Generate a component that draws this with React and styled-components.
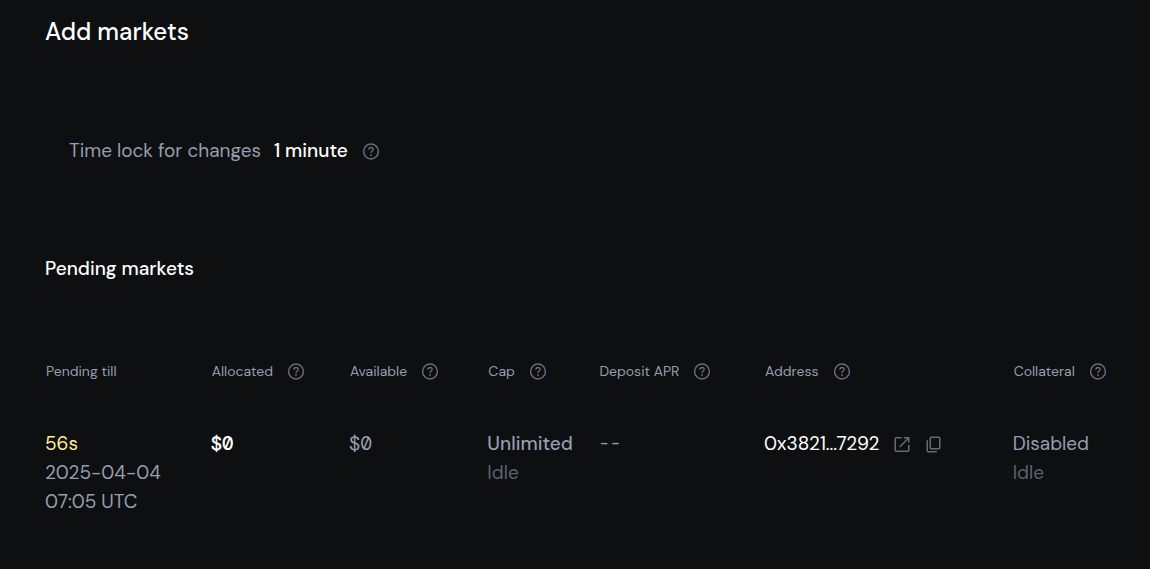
import React from 'react';
import styled, {createGlobalStyle} from 'styled-components';

const GlobalStyle = createGlobalStyle`
  body {
    margin: 0;
    min-height: 100vh;
    background: #0e0f11;
    color: #fff;
    font-family: "DM Sans", Inter, sans-serif;
    font-size: 19px;
    line-height: 29px;
  }
`;

const colors = {
  text: '#ffffff',
  muted: '#959eae',
  faint: '#5c6170',
  icon: '#666b7b',
  warning: '#ffef93',
};

const Page = styled.main`
  padding: 16px 0 16px 45px;
`;

const Title = styled.h1`
  margin: 0;
  font-size: 24px;
  font-weight: 500;
  line-height: 32px;
`;

const TimeLock = styled.section`
  display: flex;
  align-items: center;
  gap: 13px;
  padding: 88px 24px;
  color: ${colors.muted};
`;

const TimeLockValue = styled.span`
  color: ${colors.text};
  font-weight: 500;
`;

const SectionTitle = styled.h2`
  margin: 0;
  font-size: 19px;
  font-weight: 500;
  line-height: 32px;
`;

const Table = styled.table`
  width: 100%;
  margin-top: 70px;
  border-collapse: collapse;
  table-layout: fixed;
`;

const HeadCell = styled.th`
  width: ${props => props.$width};
  padding: 0 1px 42px;
  color: ${colors.muted};
  font-size: 14px;
  font-weight: 400;
  line-height: 32px;
  text-align: left;
`;

const Cell = styled.td`
  padding: 0;
  vertical-align: top;
`;

const Inline = styled.div`
  display: flex;
  align-items: center;
  gap: ${props => props.$gap || '13px'};
`;

const Value = styled.div`
  color: ${props => colors[props.$tone || 'muted']};
  font-weight: ${props => props.$medium ? 500 : 400};
  white-space: nowrap;
`;

const Amount = styled(Value)`
  font-family: "DM Mono", Inter, monospace;
  font-feature-settings: "zero", "tnum";
`;

const Placeholder = styled(Value)`
  font-family: "DM Mono", "Liberation Mono", monospace;
`;

const PendingDate = styled(Value)`
  max-width: 124px;
  white-space: normal;
`;

const IconButton = styled.button`
  display: flex;
  padding: 0;
  border: 0;
  background: none;
  color: ${colors.icon};
  cursor: pointer;
`;

const IconLink = styled.a`
  display: flex;
  color: ${colors.icon};
`;

const Icon = styled.svg`
  width: 20px;
  height: 20px;
  fill: none;
  stroke: currentColor;
  stroke-width: 1.5;
`;

const Help = ({label}) => (
  <IconButton type="button" aria-label={`About ${label}`}>
    <Icon viewBox="0 0 20 20">
      <circle cx="10" cy="10.5" r="7.4" />
      <path d="M7.8 8.6C7.9 7.3 8.8 6.5 10 6.5c1.3 0 2.2.8 2.2 1.9 0 1.5-2.2 1.9-2.2 3.6" strokeWidth="1.3" />
      <circle cx="10" cy="14" r="0.9" fill="currentColor" stroke="none" />
    </Icon>
  </IconButton>
);

const OpenIcon = () => (
  <Icon viewBox="0 0 20 20">
    <path d="M9.5 3.75H4.2a1 1 0 0 0-1 1v11.5a1 1 0 0 0 1 1h11.6a1 1 0 0 0 1-1V11" />
    <path d="M11.8 3.75h5v5M16.6 4 7.6 13" />
  </Icon>
);

const CopyIcon = () => (
  <Icon viewBox="0 0 20 20">
    <rect x="6.25" y="3.25" width="9.5" height="11.5" rx="1" />
    <path d="M3.25 6.2v10.55a1 1 0 0 0 1 1h8.6" />
  </Icon>
);

const columns = [
  {name: 'Pending till', width: '15%'},
  {name: 'Allocated', width: '12.5%', help: true},
  {name: 'Available', width: '12.5%', help: true},
  {name: 'Cap', width: '10%', help: true},
  {name: 'Deposit APR', width: '15%', help: true},
  {name: 'Address', width: '22.6%', help: true},
  {name: 'Collateral', width: '12.4%', help: true},
];

const PendingMarkets = () => (
  <Table>
    <thead>
      <tr>
        {columns.map(({name, width, help}) => (
          <HeadCell key={name} scope="col" $width={width}>
            <Inline>
              {name}
              {help && <Help label={name} />}
            </Inline>
          </HeadCell>
        ))}
      </tr>
    </thead>
    <tbody>
      <tr>
        <Cell>
          <Value $tone="warning">56s</Value>
          <PendingDate>2025-04-04 07:05 UTC</PendingDate>
        </Cell>
        <Cell><Amount $tone="text" $medium>$0</Amount></Cell>
        <Cell><Amount>$0</Amount></Cell>
        <Cell>
          <Value $medium>Unlimited</Value>
          <Value $tone="faint">Idle</Value>
        </Cell>
        <Cell><Placeholder>--</Placeholder></Cell>
        <Cell>
          <Inline $gap="12px">
            <Value $tone="text">0x3821...7292</Value>
            <IconLink href="#" aria-label="Open in explorer"><OpenIcon /></IconLink>
            <IconButton type="button" aria-label="Copy address"><CopyIcon /></IconButton>
          </Inline>
        </Cell>
        <Cell>
          <Value>Disabled</Value>
          <Value $tone="faint">Idle</Value>
        </Cell>
      </tr>
    </tbody>
  </Table>
);

const App = () => (
  <>
    <GlobalStyle />
    <Page>
      <Title>Add markets</Title>
      <TimeLock>
        <span>Time lock for changes</span>
        <TimeLockValue>1 minute</TimeLockValue>
        <Help label="time lock" />
      </TimeLock>
      <SectionTitle>Pending markets</SectionTitle>
      <PendingMarkets />
    </Page>
  </>
);

export default App;
